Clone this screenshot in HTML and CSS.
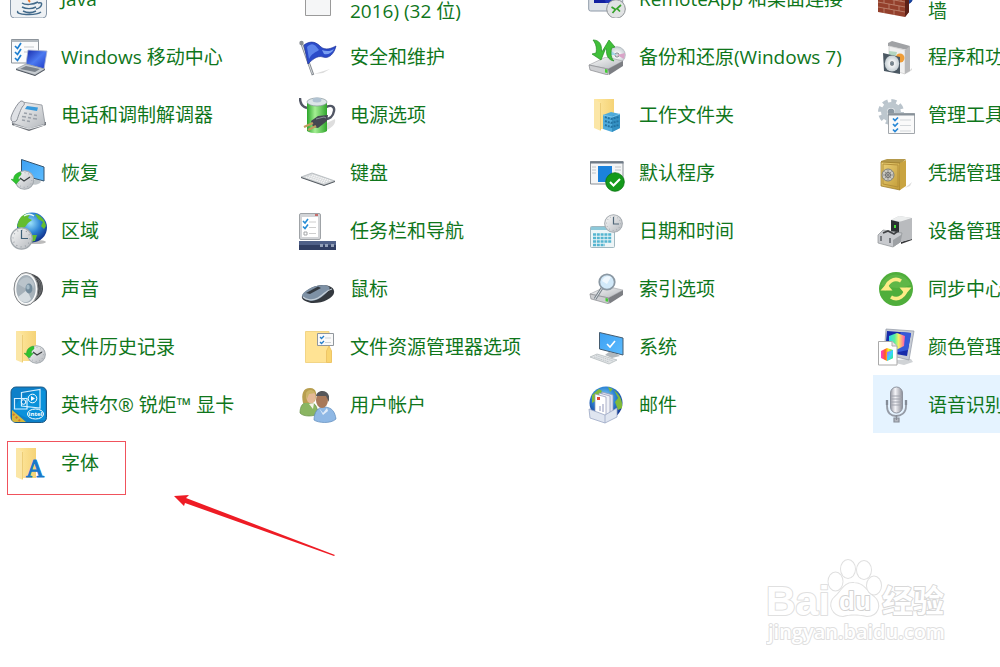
FILE: index.html
```html
<!DOCTYPE html>
<html lang="zh-CN">
<head>
<meta charset="utf-8">
<title>控制面板</title>
<link rel="stylesheet" href="styles.css">
</head>
<body>
<svg class="defs" aria-hidden="true">
  <defs>
    <linearGradient id="silver" x1="0" y1="0" x2="1" y2="1"><stop offset="0" stop-color="#fafafa"/><stop offset="1" stop-color="#b4b8bd"/></linearGradient>
    <linearGradient id="chrome" x1="0" y1="0" x2="1" y2="0"><stop offset="0" stop-color="#9a9ca6"/><stop offset=".4" stop-color="#f4f4f8"/><stop offset="1" stop-color="#8c8e98"/></linearGradient>
    <linearGradient id="sky" x1="0" y1="0" x2="1" y2="1"><stop offset="0" stop-color="#3da0f2"/><stop offset="1" stop-color="#5cbcff"/></linearGradient>
    <linearGradient id="navy" x1="0" y1="0" x2="1" y2="1"><stop offset="0" stop-color="#1628a8"/><stop offset=".5" stop-color="#4c7af0"/><stop offset="1" stop-color="#1c36c4"/></linearGradient>
    <linearGradient id="leaf" x1="0" y1="0" x2="1" y2="0"><stop offset="0" stop-color="#2aa52a"/><stop offset=".4" stop-color="#a4ee93"/><stop offset="1" stop-color="#30a52c"/></linearGradient>
    <linearGradient id="gold" x1="0" y1="0" x2="1" y2="0"><stop offset="0" stop-color="#ffe9a2"/><stop offset="1" stop-color="#f5d377"/></linearGradient>
    <linearGradient id="brass" x1="0" y1="0" x2="1" y2="1"><stop offset="0" stop-color="#ecd27a"/><stop offset="1" stop-color="#c19a35"/></linearGradient>
    <linearGradient id="hue" x1="0" y1="0" x2="1" y2="0"><stop offset="0" stop-color="#ff3bd0"/><stop offset=".35" stop-color="#ff5a20"/><stop offset=".6" stop-color="#ffee20"/><stop offset="1" stop-color="#25e065"/></linearGradient>
    <linearGradient id="hue2" x1="0" y1="0" x2="1" y2="1"><stop offset="0" stop-color="#d944ff"/><stop offset=".5" stop-color="#32d8ff"/><stop offset="1" stop-color="#38f060"/></linearGradient>
    <linearGradient id="hue3" x1="0" y1="0" x2="1" y2="0"><stop offset="0" stop-color="#30d8e8"/><stop offset=".35" stop-color="#58f0a0"/><stop offset=".6" stop-color="#f8f060"/><stop offset="1" stop-color="#ff50b0"/></linearGradient>
    <radialGradient id="ocean" cx=".45" cy=".35" r=".65"><stop offset="0" stop-color="#9be1fb"/><stop offset=".5" stop-color="#2f86d6"/><stop offset="1" stop-color="#10308c"/></radialGradient>
    <radialGradient id="disc"><stop offset="0" stop-color="#fff"/><stop offset=".25" stop-color="#8e9498"/><stop offset=".35" stop-color="#f2f4f5"/><stop offset="1" stop-color="#c5ced3"/></radialGradient>
    <symbol id="clock" viewBox="0 0 20 20">
      <circle cx="10" cy="10" r="9.300" fill="url(#silver)" stroke="#a3a9ae" stroke-width="1.100"/>
      <circle cx="10" cy="10" r="7.300" fill="none" stroke="#8b939a" stroke-width="1" stroke-dasharray=".7 3.120"/>
    </symbol>
    <symbol id="folder" viewBox="0 0 20 32">
      <path d="M0 0H20V30H6Z" fill="url(#gold)"/>
      <path d="M0 0L7 4V32L0 29Z" fill="#fbe6a6"/>
      <path d="M6.500 4V31" stroke="#e9c66c" stroke-width=".8"/>
    </symbol>
    <symbol id="back" viewBox="0 0 14 14">
      <path d="M0 8.500H3C3 4 6 1 11 0C12 2 12 3 11 4C9 5 8.500 6.500 8.500 8.500H11L6 14Z" fill="#2fc22f" stroke="#24982a" stroke-width=".5"/>
    </symbol>
    <symbol id="drive" viewBox="0 0 36 18">
      <path d="M1 8L18 0L35 4L20 12Z" fill="url(#silver)" stroke="#a6a8ac" stroke-width=".7"/>
      <path d="M1 8L20 12V18L2 13Z" fill="#cdced1" stroke="#86888c" stroke-width=".7"/>
      <path d="M20 12L35 4V9L21 18Z" fill="#7c7e83"/>
      <path d="M17 12L19.500 12.500V16L17 15.500Z" fill="#42cc34"/>
    </symbol>
  </defs>
</svg>

<main class="panel">
  <ul class="items">
    <li><a class="item" href="#java">
      <svg class="icon" viewBox="0 0 38 38"><rect x=".5" y=".5" width="36" height="37.500" rx="4" fill="#eef1f4" stroke="#8696a8"/><path d="M20 13C26 16 15 17 20 22" fill="none" stroke="#f0782c" stroke-width="2"/><path d="M12 23C15 25 23 25 28 22M12 27C16 29 22 29 26 27M8 31C4 35 26 36 31 32M28 23C34 21 32 28 26 29M13 31C17 33 22 33 26 31" fill="none" stroke="#426a8b" stroke-width="1.500"/></svg>
      <span class="label">Java</span></a></li>
    <li><a class="item" href="#mail32">
      <svg class="icon" viewBox="0 0 38 38"><path d="M6.500 2.500H31.500V35.500H6.500Z" fill="#f5f6f7" stroke="#9a9a9a"/></svg>
      <span class="label">Mail (Microsoft Outlook 2016) (32 位)</span></a></li>
    <li><a class="item" href="#remoteapp">
      <svg class="icon" viewBox="0 0 38 38"><rect x=".7" y="5" width="34" height="26" rx="2" fill="#dce1e7" stroke="#8f9aa8"/><path d="M6 9H31V23H6Z" fill="#111fa0"/><path d="M12 9H23L31 18V23H18Z" fill="#2033b8"/><circle cx="28" cy="29" r="9.300" fill="#e1e3e4" stroke="#8e9296"/><path d="M23.500 27L27.500 29.500L24.500 33M33 25L29 28.500L32 31.500" fill="none" stroke="#37a32c" stroke-width="1.700"/></svg>
      <span class="label">RemoteApp 和桌面连接</span></a></li>
    <li><a class="item" href="#firewall">
      <svg class="icon" viewBox="0 0 38 38"><circle cx="27" cy="16" r="9.500" fill="url(#ocean)"/><path d="M1 12L26 16L32 12V32L28 37L1 32Z" fill="#94402c"/><path d="M28 17L32 13V32L28 37Z" fill="#5c2118"/><path d="M1 17L28 22M1 22L28 27M1 27L28 32M7 18V23M17 20V25M12 24V29M22 26V31M7 28V33M17 30V35M5 14V18M24 16V21" stroke="#c08a76" stroke-width=".8" fill="none"/></svg>
      <span class="label">Windows Defender 防火墙</span></a></li>

    <li><a class="item" href="#mobility">
      <svg class="icon" viewBox="0 0 38 38"><path d="M1.500 1.500H28.500V25H1.500Z" fill="#fafbfc" stroke="#8d949b"/><path d="M1 3H29" stroke="#9ba4ac" stroke-width="1.500"/><path d="M5 8L7.500 10.500L11 5M5 14L7.500 16.500L11 11M5 20L7.500 22.500L11 17" fill="none" stroke="#1e7fd0" stroke-width="1.700"/><path d="M14 9H24M14 14H18" stroke="#c3c8cd"/><path d="M18 12L37 13L34 31L16 26Z" fill="url(#navy)" stroke="#aab4d0" stroke-width=".8"/><path d="M6 31L16 26L35 31L25 37Z" fill="#c6cbd0" stroke="#8d949b" stroke-width=".7"/><path d="M10 31L16 28L30 31L25 34Z" fill="#7a828b"/><path d="M6 31L25 37L35 31V32L25 38L6 32Z" fill="#4b525c"/></svg>
      <span class="label">Windows 移动中心</span></a></li>
    <li><a class="item" href="#security">
      <svg class="icon" viewBox="0 0 38 38"><path d="M15 36L31 31L24 35Z" fill="#dcdcdc"/><path d="M2.500 5L14 37" stroke="#868b91" stroke-width="2.600"/><path d="M2.500 5L13.500 36" stroke="#d4d8dc" stroke-width="1"/><path d="M5 7C12 2 17 4 22 9C27 13 33 10 37 8C35 16 30 21 24 19C18 17 13 22 9 26Z" fill="#2b4bc9" stroke="#1c329b" stroke-width=".7"/><path d="M8 9C13 4 16 6 20 12C16 15 13 15 10 21Z" fill="#5d84ea"/><path d="M23 12C28 14 32 13 35 11C33 15 29 17 25 16Z" fill="#7ba0f2"/><circle cx="2.500" cy="5" r="2.200" fill="#888d92"/></svg>
      <span class="label">安全和维护</span></a></li>
    <li><a class="item" href="#backup">
      <svg class="icon" viewBox="0 0 38 38"><circle cx="29" cy="17" r="8.300" fill="url(#disc)" stroke="#a9afb4" stroke-width=".7"/><path d="M29 17L37 15L36 21Z" fill="#d9a3c7"/><path d="M29 17L22 12L21 17Z" fill="#a3d5e5"/><use href="#drive" x="0" y="19" width="36" height="18"/><path d="M5 2C11 2 14 6 13.500 13L17 12L13 22L4 16L8 15C9 10 8 6 5 2Z" fill="#40bf39" stroke="#248f25" stroke-width=".7"/><path d="M26 23C20 22 18 17 18.500 11L15 12L21 2L27 9L23.500 10C22.500 16 23 20 26 23Z" fill="#40bf39" stroke="#248f25" stroke-width=".7"/></svg>
      <span class="label">备份和还原(Windows 7)</span></a></li>
    <li><a class="item" href="#programs">
      <svg class="icon" viewBox="0 0 38 38"><path d="M29 36L35 30V32Z" fill="#ddd"/><path d="M11 5L15 3L33 8L31 12L11 8Z" fill="#a0a2a5"/><path d="M12 8L28 12V36L12 31Z" fill="#f0f0f0" stroke="#c9c9c9" stroke-width=".7"/><path d="M28 12L33 8V33L28 36Z" fill="#b7b8ba"/><circle cx="23" cy="20" r="4.500" fill="#ef9d37"/><path d="M12 13L20 14L18 22H12Z" fill="#b4d6c0"/><path d="M6 15L23 19V36L7 33Z" fill="#4b5863"/><ellipse cx="15" cy="25.500" rx="7.200" ry="8" fill="url(#disc)"/><circle cx="15" cy="25.500" r="1.600" fill="#71808b"/></svg>
      <span class="label">程序和功能</span></a></li>

    <li><a class="item" href="#phone">
      <svg class="icon" viewBox="0 0 38 38"><path d="M2 29L19 35L36 29V26H2Z" fill="#70747a"/><path d="M12 6L32 9L35 28L19 33L2 27Z" fill="url(#silver)" stroke="#8d9299" stroke-width=".8"/><path d="M17 10L28 11.500L27 15L15 13Z" fill="#389adc"/><path d="M1 23C0 20 8 6 11 5C15 5 15 9 13 10C11 12 8 21 7 24C5 27 1 26 1 23Z" fill="#dfe1e5" stroke="#81868e" stroke-width=".9"/><path d="M14 17L17 17.500M19 18L22 18.500M24 19L27 19.500M12 20.500L16 21M18 21.500L21 22M23 22.500L27 23M12 24L15 24.500M17 25L20 25.500" stroke="#9ba1a9" stroke-width="1.600"/><path d="M4 29L19 33L34 29" fill="none" stroke="#e1e3e5"/></svg>
      <span class="label">电话和调制解调器</span></a></li>
    <li><a class="item" href="#power">
      <svg class="icon" viewBox="0 0 38 38"><path d="M28 34C34 31 37 27 36 23L28 27Z" fill="#dedede"/><path d="M1 2C1 9 4 11 8 12M26 12C31 8 36 10 35 15C34 21 30 23 27 23" fill="none" stroke="#525765" stroke-width="2.400"/><path d="M8 7V35C12 38 24 38 28 35V7Z" fill="url(#leaf)"/><ellipse cx="18" cy="6" rx="10" ry="4" fill="#dce5e8" stroke="#87959b" stroke-width=".7"/><ellipse cx="18" cy="4" rx="4.500" ry="2.500" fill="#b1c3d2"/><path d="M12 25L19 20L29 19L28 25L19 32L14 31Z" fill="#444751"/><path d="M17 23L25 21L27 22" fill="none" stroke="#8a8e99"/><path d="M14 27L5 31M17 30L9 34" stroke="#c09c60" stroke-width="2.300"/></svg>
      <span class="label">电源选项</span></a></li>
    <li><a class="item" href="#workfolders">
      <svg class="icon" viewBox="0 0 38 38"><use href="#folder" x="6" y="3" width="20" height="32"/><path d="M15 19L23 16L32 18V32L24 36L15 33Z" fill="#4fabdb"/><path d="M24 20L32 18V32L24 36Z" fill="#3490c2"/><path d="M17 21L23 23L31 21M17 25L23 27L31 25M17 29L23 31L31 29" fill="none" stroke="#2272a2" stroke-width="2" stroke-dasharray="2 1"/><path d="M15 19L24 21L32 18" stroke="#7bc5e9" fill="none"/></svg>
      <span class="label">工作文件夹</span></a></li>
    <li><a class="item" href="#admintools">
      <svg class="icon" viewBox="0 0 38 38"><circle cx="14" cy="16" r="10.800" fill="none" stroke="#bac4cc" stroke-width="4.400" stroke-dasharray="5 3.480"/><circle cx="14" cy="16" r="7" fill="none" stroke="#bdc7ce" stroke-width="6"/><circle cx="14" cy="16" r="3.500" fill="#8b98a2"/><path d="M11.500 17.500H37.500V37.500H11.500Z" fill="#fafafa" stroke="#a2a7ac"/><path d="M11 18.500H38" stroke="#89929a" stroke-width="2"/><path d="M16 22.500L18 24.500L21 21.500M16 28L18 30L21 27M16 33.500L18 35.500L21 32.500" fill="none" stroke="#2686d6" stroke-width="1.700"/><path d="M23 24H34M23 29.500H34M23 35H34" stroke="#d3d7da"/></svg>
      <span class="label">管理工具</span></a></li>

    <li><a class="item" href="#recovery">
      <svg class="icon" viewBox="0 0 38 38"><path d="M21 27L28 24L31 28C27 32 22 31 19 28Z" fill="#bfc5c9"/><path d="M11.500 5.500L34 13V27L11.500 21Z" fill="url(#sky)" stroke="#34536e"/><use href="#clock" x="4.500" y="16" width="20" height="20"/><path d="M10 24L14 27L20 23" fill="none" stroke="#3b3f43" stroke-width="1.200"/><use href="#back" x="1" y="17" width="12" height="14"/></svg>
      <span class="label">恢复</span></a></li>
    <li><a class="item" href="#keyboard">
      <svg class="icon" viewBox="0 0 38 38"><path d="M2 23L13 19L36 27L25 31Z" fill="#d5d8da" stroke="#a8adb1" stroke-width=".7"/><path d="M2 23L25 31L36 27V28L25 32L2 24Z" fill="#50565c"/><path d="M7 23L26 29M10 22L29 28M13 21L32 27" stroke="#f8f8f8" stroke-width="1.200" stroke-dasharray="1.500 .7"/></svg>
      <span class="label">键盘</span></a></li>
    <li><a class="item" href="#defaults">
      <svg class="icon" viewBox="0 0 38 38"><path d="M2.500 7.500H35V30H2.500Z" fill="#f4f5f6" stroke="#8a9097"/><path d="M2 8.500H35.500" stroke="#6f7b87" stroke-width="2"/><path d="M4 13H8M4 16H8M4 19H8M27 13H33M27 16H33" stroke="#bec4c9"/><path d="M10 12H24V28H10Z" fill="#1b82dc"/><circle cx="27" cy="28" r="9.300" fill="#149a1b" stroke="#0a7411" stroke-width=".8"/><path d="M22 28L25.500 31.500L32 25" fill="none" stroke="#fff" stroke-width="2.100"/></svg>
      <span class="label">默认程序</span></a></li>
    <li><a class="item" href="#credentials">
      <svg class="icon" viewBox="0 0 38 38"><path d="M28 34L35 28L33 32Z" fill="#ddd"/><path d="M4 7L10 5H29L25 9H4Z" fill="#b4994b"/><path d="M4 8L23 9V36L4 32Z" fill="url(#brass)" stroke="#957423" stroke-width=".7"/><path d="M23 9L29 6V32L23 36Z" fill="#c9a441"/><path d="M6 10L21 11V33L6 30Z" fill="none" stroke="#b4903a"/><circle cx="11" cy="21" r="6" fill="#cbc9c0" stroke="#81817a"/><circle cx="11" cy="21" r="2.500" fill="none" stroke="#666"/><path d="M11 16V26M6 21H16M7.500 17.500L14.500 24.500M14.500 17.500L7.500 24.500" stroke="#797979" stroke-width=".7"/></svg>
      <span class="label">凭据管理器</span></a></li>

    <li><a class="item" href="#region">
      <svg class="icon" viewBox="0 0 38 38"><ellipse cx="26" cy="30" rx="10" ry="2" fill="#bbb"/><circle cx="22" cy="15.500" r="15" fill="url(#ocean)"/><path d="M9 8C12 2 17 1 20 2L18 6L22 8L18 11L15 15L10 17L7 14ZM25 2C31 3 35 8 36 14L34 17L31 14L33 10L28 7ZM22 23L27 23L25 29L20 30Z" fill="#64bd2f"/><path d="M14 4C17 2 21 2 24 4" fill="none" stroke="#e1f7f5" stroke-width="1.500"/><use href="#clock" x="0" y="15" width="23" height="23"/><path d="M11.500 18V26.500H18" fill="none" stroke="#3d6078" stroke-width="1.200"/></svg>
      <span class="label">区域</span></a></li>
    <li><a class="item" href="#taskbar">
      <svg class="icon" viewBox="0 0 38 38"><rect x=".5" y="1.500" width="21" height="26" rx="1.500" fill="#d2d4d7" stroke="#9fa3a7"/><path d="M3 5H19V25H3Z" fill="#fff"/><path d="M16 3H19" stroke="#c24a46" stroke-width="1.500"/><path d="M4 9L6 11L9 7M4 14.500L6 16.500L9 12.500" stroke="#258cd5" fill="none" stroke-width="1.600"/><path d="M5 20H8V23H5Z" fill="none" stroke="#a4a6a8"/><path d="M10 10H17M10 15.500H17M10 21.500H17" stroke="#cecece"/><path d="M0 29H37V38H0Z" fill="#303e63"/><path d="M0 29H37V33H0Z" fill="#4f6088"/><path d="M21 32H24V35H21ZM26 32H29V35H26ZM32 32H35V35H32Z" fill="#93a0b8"/></svg>
      <span class="label">任务栏和导航</span></a></li>
    <li><a class="item" href="#datetime">
      <svg class="icon" viewBox="0 0 38 38"><rect x="2.500" y="14.500" width="24" height="21" rx="1" fill="#edf5f7" stroke="#a1b8c0"/><path d="M3 15H26V18H3Z" fill="#8cc8d9"/><path d="M5 22.500H24M5 26H24M5 29.500H24M5 33H17" stroke="#55b5d0" stroke-width="2.500" stroke-dasharray="3 .8"/><use href="#clock" x="16" y="2" width="19" height="19"/><path d="M25.500 5V12H31" fill="none" stroke="#506779" stroke-width="1.200"/></svg>
      <span class="label">日期和时间</span></a></li>
    <li><a class="item" href="#devices">
      <svg class="icon" viewBox="0 0 38 38"><path d="M24 30L35 26V28L24 32Z" fill="#37393b"/><path d="M14 8L22 4L35 6V27L24 30L14 25Z" fill="#c7c9cc"/><path d="M22 4L35 6L25 10L14 8Z" fill="#eceeee"/><path d="M14 8L22 10V24L14 22Z" fill="#2c3033"/><path d="M22 10L35 6V27L22 30Z" fill="#b9bbbe"/><path d="M18 13V16" stroke="#48df39" stroke-width="2"/><path d="M1 23L6 18L25 21L23 30L16 35L1 31Z" fill="#c8cace" stroke="#8d9094" stroke-width=".7"/><path d="M6 21L11 19L17 22L21 19" fill="none" stroke="#404245" stroke-width="1.700"/><path d="M4 24V29M13 26V31" stroke="#686c71" stroke-width="1.700"/><path d="M16 28L24 23V30L16 35Z" fill="#9da0a4"/></svg>
      <span class="label">设备管理器</span></a></li>

    <li><a class="item" href="#sound">
      <svg class="icon" viewBox="0 0 38 38"><path d="M17 3C28 4 33 10 33 19C33 26 25 33 18 34Z" fill="#46494c"/><path d="M26 8C32 13 31 24 26 29M28 9C34 14 32 23 27 28" fill="none" stroke="#737679" stroke-width=".8"/><ellipse cx="16" cy="19" rx="12" ry="16.500" fill="#dcdddd" stroke="#85888b"/><ellipse cx="16" cy="19" rx="10.300" ry="14.500" fill="#a6b1b9" stroke="#fff" stroke-width="1.200"/><path d="M8 14C12 5 21 5 24 14C24 20 21 22 18 20Z" fill="#bac4cb"/><path d="M17 20L8 27C11 33 17 34 21 29Z" fill="#d5dce0"/><ellipse cx="19" cy="18.500" rx="3.500" ry="5" fill="#738b9b"/><ellipse cx="18" cy="17" rx="1.700" ry="2.500" fill="#a4bac7"/></svg>
      <span class="label">声音</span></a></li>
    <li><a class="item" href="#mouse">
      <svg class="icon" viewBox="0 0 38 38"><path d="M3 26C6 20 14 16 23 15C31 15 36 18 35 23C34 28 23 34 12 33C5 31 2 29 3 26Z" fill="#34393f"/><path d="M3 25C7 19 16 15 25 15C31 16 32 18 29 21C24 27 18 31 11 31C6 29 3 28 3 25Z" fill="#7e91a5"/><path d="M4 27C7 30 14 31 19 28C26 24 27 20 33 19" fill="none" stroke="#c4ced7" stroke-width="1.200"/><path d="M7 23L19 16.500L22 18L11 24Z" fill="#343a42"/></svg>
      <span class="label">鼠标</span></a></li>
    <li><a class="item" href="#indexing">
      <svg class="icon" viewBox="0 0 38 38"><use href="#drive" x="1" y="16" width="35" height="18"/><path d="M14 18L7 29" stroke="#7c858d" stroke-width="3"/><path d="M14 18L7 29" stroke="#dce0e3" stroke-width="1"/><circle cx="19" cy="12" r="7.700" fill="#d2e9f9" stroke="#8b98a3" stroke-width="1.800"/><path d="M14 11C15 7 20 5 23 7L19 14Z" fill="#f0f8fe"/></svg>
      <span class="label">索引选项</span></a></li>
    <li><a class="item" href="#sync">
      <svg class="icon" viewBox="0 0 38 38"><circle cx="19" cy="19" r="17" fill="#4fae3b"/><path d="M4 15A16 16 0 0 1 34 15Q20 21 4 15Z" fill="#69bd50" opacity=".6"/><path d="M9.500 20A9.500 9.500 0 0 1 24 11M28.500 18A9.500 9.500 0 0 1 14 27" fill="none" stroke="#fdec87" stroke-width="3.600"/><path d="M3.500 20.500H15.500L9.500 13.500ZM22.500 17.500H34.500L28.500 24.500Z" fill="#fdec87"/></svg>
      <span class="label">同步中心</span></a></li>

    <li><a class="item" href="#filehistory">
      <svg class="icon" viewBox="0 0 38 38"><use href="#folder" x="6" y="3" width="20" height="32"/><use href="#clock" x="17" y="17" width="19" height="19"/><path d="M23 24L27 27L32 24" fill="none" stroke="#3b3f43" stroke-width="1.200"/><use href="#back" x="14" y="17" width="12" height="14"/></svg>
      <span class="label">文件历史记录</span></a></li>
    <li><a class="item" href="#explorer">
      <svg class="icon" viewBox="0 0 38 38"><path d="M6.500 3.500H30V34.500H6.500Z" fill="#ffe394" stroke="#f2d586"/><path d="M18.500 5.500H34.500V17.500H18.500Z" fill="#fafafa" stroke="#91979d"/><path d="M21 9L22.500 10.500L25 8M21 14L22.500 15.500L25 13" fill="none" stroke="#267fc9" stroke-width="1.300"/><path d="M26 10H32M26 14.500H32" stroke="#cfd3d6"/><path d="M27.500 34.500V23L30 18L32.500 23V34.500Z" fill="#f9d570" stroke="#eec567"/></svg>
      <span class="label">文件资源管理器选项</span></a></li>
    <li><a class="item" href="#system">
      <svg class="icon" viewBox="0 0 38 38"><path d="M21 24L29 26L32 28L24 30L17 27Z" fill="#b2b8bc"/><path d="M11.500 4.500L35 10V27L11.500 21Z" fill="url(#sky)" stroke="#455c70"/><path d="M19 16L22 19L27 13" fill="none" stroke="#fff" stroke-width="1.600"/><path d="M2 29L9 26L29 32L21 36Z" fill="#e0e3e5" stroke="#aeb4b8" stroke-width=".7"/><path d="M6 29L21 34M8 27.500L25 33" stroke="#b8bfc4" stroke-width=".8" stroke-dasharray="1.500 .8"/></svg>
      <span class="label">系统</span></a></li>
    <li><a class="item" href="#color">
      <svg class="icon" viewBox="0 0 38 38"><path d="M19 32L34 31L36 34L27 37L18 35Z" fill="#d0d3d6"/><path d="M9 1L37 3L32 32L7 26Z" fill="#c7ccd5" stroke="#8f97a4" stroke-width=".7"/><path d="M10 3L34 5L30 28L8 24Z" fill="#172baa"/><path d="M24 4L34 5L31 22L17 25Z" fill="#3559d8"/><path d="M12 8L20 5L28 8L27 18L19 22L12 17Z" fill="url(#hue3)"/><path d="M1.500 13.500H15L20 18V37H1.500Z" fill="#fff" stroke="#aaa"/><path d="M15 13.500V18H20" fill="#e6e6e6" stroke="#aaa"/><path d="M4 23L10 20L16 22V30L10 33L4 30Z" fill="url(#hue)"/><path d="M10 24L16 22V30L10 33Z" fill="url(#hue2)"/></svg>
      <span class="label">颜色管理</span></a></li>

    <li><a class="item" href="#graphics">
      <svg class="icon" viewBox="0 0 38 38"><rect x="1" y="1" width="35.500" height="35.500" rx="5" fill="#0d80c9" stroke="#1d5984"/><path d="M2 24L16 36H5Q2 36 2 33Z" fill="#d7b93c"/><path d="M3 28L10 35" stroke="#d3742f" stroke-width="2" stroke-dasharray="2 2"/><path d="M3 23C11 32 22 34 35 34V5L28 3L9 14Z" fill="#0a91da"/><path d="M11.500 6.500L30 3.500V22L11.500 20ZM4.500 12.500H17V23H4.500Z" fill="none" stroke="#d6efff" stroke-width="1.200"/><circle cx="22.500" cy="12.500" r="4.300" fill="none" stroke="#fff"/><path d="M21 10L25 12.500L21 15Z" fill="#fff"/><circle cx="13.500" cy="16" r="2.300" fill="#0a82cf" stroke="#fff"/><ellipse cx="25.500" cy="28" rx="8" ry="5" fill="#0a91da" stroke="#fff"/><text class="intel" x="25.500" y="30" text-anchor="middle">intel</text></svg>
      <span class="label">英特尔® 锐炬™ 显卡</span></a></li>
    <li><a class="item" href="#users">
      <svg class="icon" viewBox="0 0 38 38"><path d="M1 27C1 20 4 16 9 16C15 16 18 19 19 27C16 31 4 31 1 27Z" fill="#8ab562" stroke="#658f48" stroke-width=".7"/><path d="M4 17C2 8 4 2 11 2C18 2 18 9 16 15L13 17Z" fill="#b89f50"/><ellipse cx="12" cy="11" rx="4.700" ry="6.500" fill="#e4b996"/><path d="M7 7C9 3 14 3 16 7L10 8L8 13Z" fill="#cbb568"/><path d="M10 18L15 17L14 23Z" fill="#f4f3e7"/><path d="M15 34C15 26 19 21 25 21C33 21 36 26 37 33C32 38 19 37 15 34Z" fill="#8fb8e5" stroke="#5c89ba" stroke-width=".7"/><ellipse cx="23" cy="14" rx="6" ry="8" fill="#a8795a"/><path d="M17 10C18 4 28 3 30 10V16L27 10L17 10Z" fill="#56575a"/><path d="M20 22L24 27L28 22L29 25L24 29Z" fill="#e1ecf9"/></svg>
      <span class="label">用户帐户</span></a></li>
    <li><a class="item" href="#mail">
      <svg class="icon" viewBox="0 0 38 38"><circle cx="18" cy="17" r="16.500" fill="url(#ocean)"/><path d="M4 9L11 3L14 5L9 14L4 17ZM26 4C32 9 35 15 34 22L30 24L27 16L30 12ZM20 1L25 3L22 6Z" fill="#80ba39"/><path d="M14 6L25 9V28H14Z" fill="#dee1ee" stroke="#9196b4" stroke-width=".7"/><path d="M11 7L22 10V29H11Z" fill="#eff1f7" stroke="#9196b4" stroke-width=".7"/><path d="M7 8L18 11V30H7Z" fill="#fff" stroke="#9196b4" stroke-width=".7"/><path d="M9 11H12V14H9Z" fill="#e44431"/><path d="M12 20V25M15 18V26" stroke="#b6bbd2" stroke-width="1.500"/><path d="M1 23L17 29L29 22V31L17 37L2 32Z" fill="#dfe5f0" stroke="#9ba7c4" stroke-width=".8"/><path d="M17 29V37" stroke="#9ba7c4" stroke-width=".8"/></svg>
      <span class="label">邮件</span></a></li>
    <li><a class="item item-selected" href="#speech">
      <svg class="icon" viewBox="0 0 38 38"><path d="M10 16V20C10 27 14 30 19 30C24 30 29 27 29 20V16" fill="none" stroke="#959ba6" stroke-width="1.800"/><rect x="13.500" y="1" width="12" height="26" rx="6" fill="url(#chrome)" stroke="#8d929d"/><path d="M14 10H25M14 13H25M14 16H25M14 19H25" stroke="#a0a3ad" stroke-width="1"/><path d="M10 14V19M29 14V19" stroke="#848c97" stroke-width="2.300"/><path d="M19.500 29V34M17 32H22V36H17Z" fill="#b5b8c0" stroke="#878d97" stroke-width="1.200"/></svg>
      <span class="label">语音识别</span></a></li>

    <li><a class="item" href="#fonts">
      <svg class="icon" viewBox="0 0 38 38"><use href="#folder" x="6" y="4" width="20" height="32"/><text class="letter" x="25" y="33" text-anchor="middle">A</text></svg>
      <span class="label">字体</span></a></li>
  </ul>

  <div class="callout-box"></div>
  <svg class="callout-arrow" viewBox="0 0 162 62" aria-hidden="true"><path d="M0 1L15 0L12 3L161 60L160 61L11 8L10 11Z" fill="#ee1c25"/></svg>

  <svg class="watermark" viewBox="0 0 184 92" role="img" aria-label="Baidu 经验 jingyan.baidu.com">
    <g class="mark-lines">
      <path d="M88 27C78 26 76 35 69 41C61 48 67 60 77 60C84 58 92 58 101 60C112 60 116 48 108 41C101 36 98 27 88 27Z"/>
      <ellipse cx="69.500" cy="25.500" rx="7" ry="9"/><ellipse cx="82" cy="13" rx="7" ry="9"/><ellipse cx="98" cy="14" rx="7" ry="9"/><ellipse cx="108" cy="29.500" rx="7" ry="9"/>
      <text class="mark-bai" x="0" y="59">Bai</text>
      <text class="mark-du" x="73" y="54">du</text>
      <text class="mark-cn" x="116" y="56">经验</text>
      <text class="mark-url" x="2" y="83">jingyan.baidu.com</text>
    </g>
  </svg>
</main>
</body>
</html>
```
FILE: styles.css
```css
* {
  box-sizing: border-box;
}

body {
  margin: 0;
  background: #fff;
  font-family: "Open Sans", "Noto Sans CJK SC", sans-serif;
  font-size: 19px;
  line-height: 25px;
  color: #0f761b;
}

.defs {
  position: absolute;
  width: 0;
  height: 0;
}

.panel {
  position: relative;
  height: 100vh;
  overflow: hidden;
}

/* The list is scrolled so that its first row is half out of view. */
.items {
  display: grid;
  grid-template-columns: repeat(4, 289px);
  grid-auto-rows: 58px;
  margin: -31px 0 0;
  padding: 0 0 0 6px;
  list-style: none;
}

.item {
  display: flex;
  align-items: center;
  gap: 13px;
  height: 100%;
  padding: 2px 12px 0 4px;
  color: inherit;
  text-decoration: none;
}

.item:hover,
.item-selected {
  background: #e5f3ff;
}

.icon {
  flex: none;
  width: 38px;
  height: 38px;
}

.intel {
  fill: #fff;
  font: bold 6px "Open Sans", sans-serif;
}

.letter {
  fill: #1878c8;
  stroke: #1878c8;
  stroke-width: 1px;
  font: 25px "Liberation Serif", serif;
}

.callout-box {
  position: absolute;
  top: 441px;
  left: 7px;
  width: 119px;
  height: 54px;
  border: 1px solid #f0525c;
}

.callout-arrow {
  position: absolute;
  top: 495px;
  left: 174px;
  width: 162px;
  height: 62px;
}

.watermark {
  position: absolute;
  top: 556px;
  left: 766px;
  width: 184px;
  height: 92px;
}

.mark-lines {
  fill: #fff;
  stroke: #e0e0e0;
  stroke-width: 2px;
  stroke-linejoin: round;
  paint-order: stroke;
}

.mark-bai {
  font: bold 41px "Liberation Sans", sans-serif;
}

.mark-du {
  stroke: #d2d2d2;
  font: bold 26px "Liberation Sans", sans-serif;
}

.mark-cn {
  stroke: #d8d8d8;
  font: bold 31px "Noto Sans CJK SC", sans-serif;
}

.mark-url {
  font: 600 20px "Open Sans", sans-serif;
}
```
